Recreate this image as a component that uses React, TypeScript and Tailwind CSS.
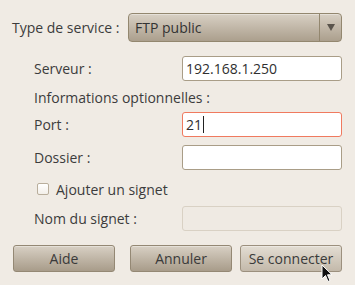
import React from "react";

const font = { fontFamily: '"Open Sans", "DejaVu Sans", sans-serif' };

function Input({ value, focus, disabled, caret }: { value?: string; focus?: boolean; disabled?: boolean; caret?: boolean }) {
  const border = focus
    ? "border-[#f07a5f]"
    : disabled
    ? "border-[#d9d1c4]"
    : "border-[#a99d87]";
  const bg = disabled ? "bg-[#efeae3]" : "bg-white";
  return (
    <div className={`w-[160px] h-[25px] rounded-[3px] border ${border} ${bg} flex items-center pl-[3px] text-[14px] text-[#2f2f2f]`}>
      {value}
      {caret && <span className="inline-block w-[1px] h-[17px] bg-[#222] ml-[1px]" />}
    </div>
  );
}

function Button({ label, hover }: { label: string; hover?: boolean }) {
  const bg = hover
    ? "bg-gradient-to-b from-[#e3ddd3] to-[#c3b9aa] border-[#9c907e]"
    : "bg-gradient-to-b from-[#d8d0c4] to-[#a89c8a] border-[#948874]";
  return (
    <div className={`w-[102px] h-[27px] rounded-[3px] border ${bg} flex items-center justify-center text-[14px] text-[#3a3a3a] shadow-[inset_0_1px_0_rgba(255,255,255,0.35)]`}>
      {label}
    </div>
  );
}

export default function App() {
  return (
    <div className="relative w-[355px] h-[285px] bg-[#f0ebe4] text-[14px] text-[#3c3c3c] overflow-hidden" style={font}>
      <div className="flex items-center pt-[13px] pl-[12px]">
        <div className="w-[116px]">Type de service :</div>
        <div className="w-[214px] h-[29px] rounded-[4px] border border-[#93876f] bg-gradient-to-b from-[#d8d0c4] to-[#ab9f8d] flex items-stretch shadow-[inset_0_1px_0_rgba(255,255,255,0.35)]">
          <div className="flex-1 flex items-center pl-[6px] text-[#333]">FTP public</div>
          <div className="w-[22px] border-l border-[#93876f] flex items-center justify-center">
            <svg width="8" height="7" viewBox="0 0 8 7">
              <polygon points="0,0 8,0 4,7" fill="#5a544c" />
            </svg>
          </div>
        </div>
      </div>

      <div className="pl-[34px]">
        <div className="flex items-center mt-[14px]">
          <div className="w-[148px]">Serveur :</div>
          <Input value="192.168.1.250" />
        </div>
        <div className="mt-[7px] h-[18px] flex items-center">Informations optionnelles :</div>
        <div className="flex items-center mt-[6px]">
          <div className="w-[148px]">Port :</div>
          <Input value="21" focus caret />
        </div>
        <div className="flex items-center mt-[8px]">
          <div className="w-[148px]">Dossier :</div>
          <Input />
        </div>
        <div className="flex items-center mt-[12px] h-[14px]">
          <div className="ml-[3px] w-[12px] h-[12px] rounded-[2px] border border-[#b9ae9c] bg-gradient-to-b from-white to-[#f3efe9]" />
          <div className="ml-[7px]">Ajouter un signet</div>
        </div>
        <div className="flex items-center mt-[10px]">
          <div className="w-[148px]">Nom du signet :</div>
          <Input disabled />
        </div>
      </div>

      <div className="flex gap-[15px] pl-[13px] mt-[14px]">
        <Button label="Aide" />
        <Button label="Annuler" />
        <div className="ml-[-7px]">
          <Button label="Se connecter" hover />
        </div>
      </div>

      <svg className="absolute left-[321px] top-[264px]" width="13" height="20" viewBox="0 0 13 20">
        <path d="M1 1 L1 15 L4.5 11.5 L7 17.5 L9 16.5 L6.5 10.8 L11 10.8 Z" fill="#111" stroke="#fff" strokeWidth="1" strokeLinejoin="round" />
      </svg>
    </div>
  );
}
